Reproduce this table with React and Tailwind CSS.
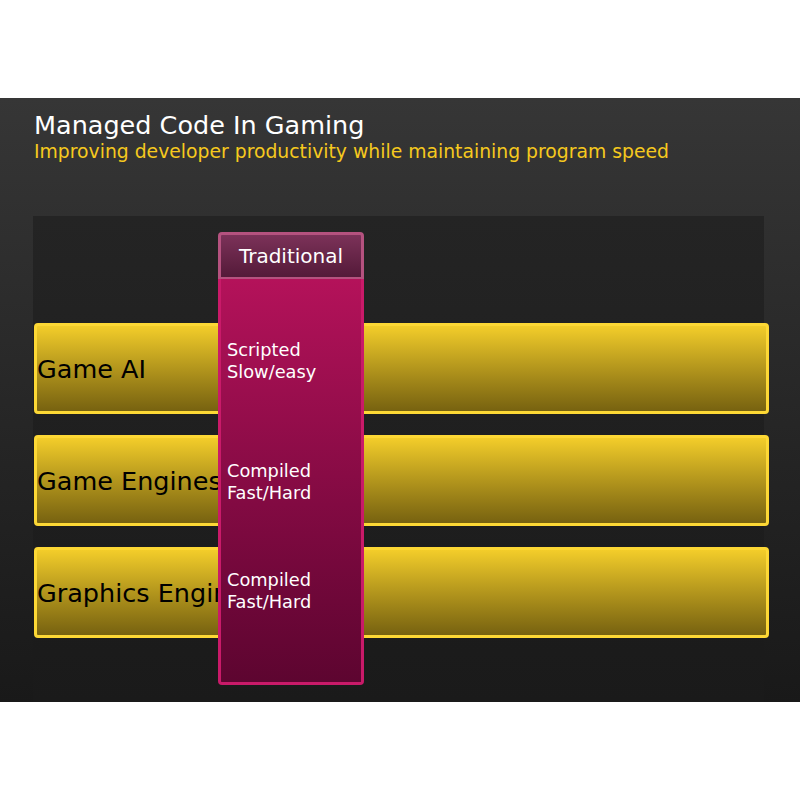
const rows = [
  { label: "Game AI", lines: ["Scripted", "Slow/easy"] },
  { label: "Game Engines", lines: ["Compiled", "Fast/Hard"] },
  { label: "Graphics Engines", lines: ["Compiled", "Fast/Hard"] },
];

const Bar = ({ label }) => (
  <div className="h-[91px] w-[735px] ml-[1px] rounded-[4px] border-[3px] border-[#fdd835] bg-gradient-to-b from-[#f3cd2a] to-[#776210] flex items-center overflow-hidden">
    <span className="text-[25.5px] leading-[30px] text-black whitespace-nowrap">{label}</span>
  </div>
);

const App = () => {
  return (
    <div className="w-[800px] h-[800px] bg-white font-['DejaVu_Sans',sans-serif] flex flex-col">
      <div className="h-[98px]" />
      <div className="h-[604px] bg-gradient-to-b from-[#363636] to-[#191919] flex flex-col">
        <div className="pl-[34px] pt-[11px]">
          <h1 className="text-[25.5px] leading-[32px] text-white">Managed Code In Gaming</h1>
          <p className="text-[18.8px] leading-[24px] text-[#f6c91e] -mt-[1px]">
            Improving developer productivity while maintaining program speed
          </p>
        </div>
        <div className="relative mt-[52px] ml-[33px] w-[731px] flex-1 bg-gradient-to-b from-[#242424] to-[#1a1a1a]">
          <div className="pt-[107px] flex flex-col gap-[21px]">
            {rows.map((r) => (
              <Bar key={r.label} label={r.label} />
            ))}
          </div>

          <div className="absolute left-[185px] top-[16px] w-[146px] h-[453px] flex flex-col">
            <div className="h-[48px] rounded-t-[4px] border-[3px] border-[#b5527f] bg-gradient-to-b from-[#7c3259] to-[#541a39] flex items-center justify-center">
              <span className="text-[20px] text-white">Traditional</span>
            </div>
            <div className="flex-1 -mt-[1px] rounded-b-[4px] border-[3px] border-t-0 border-[#c91a69] bg-gradient-to-b from-[#b4125a] to-[#5d0530] pl-[6px] text-[17.8px] leading-[22px] text-white">
              <div className="mt-[60px]">
                <div>{rows[0].lines[0]}</div>
                <div>{rows[0].lines[1]}</div>
              </div>
              <div className="mt-[77px]">
                <div>{rows[1].lines[0]}</div>
                <div>{rows[1].lines[1]}</div>
              </div>
              <div className="mt-[65px]">
                <div>{rows[2].lines[0]}</div>
                <div>{rows[2].lines[1]}</div>
              </div>
            </div>
          </div>
        </div>
      </div>
      <div className="flex-1" />
    </div>
  );
};

export default App;
